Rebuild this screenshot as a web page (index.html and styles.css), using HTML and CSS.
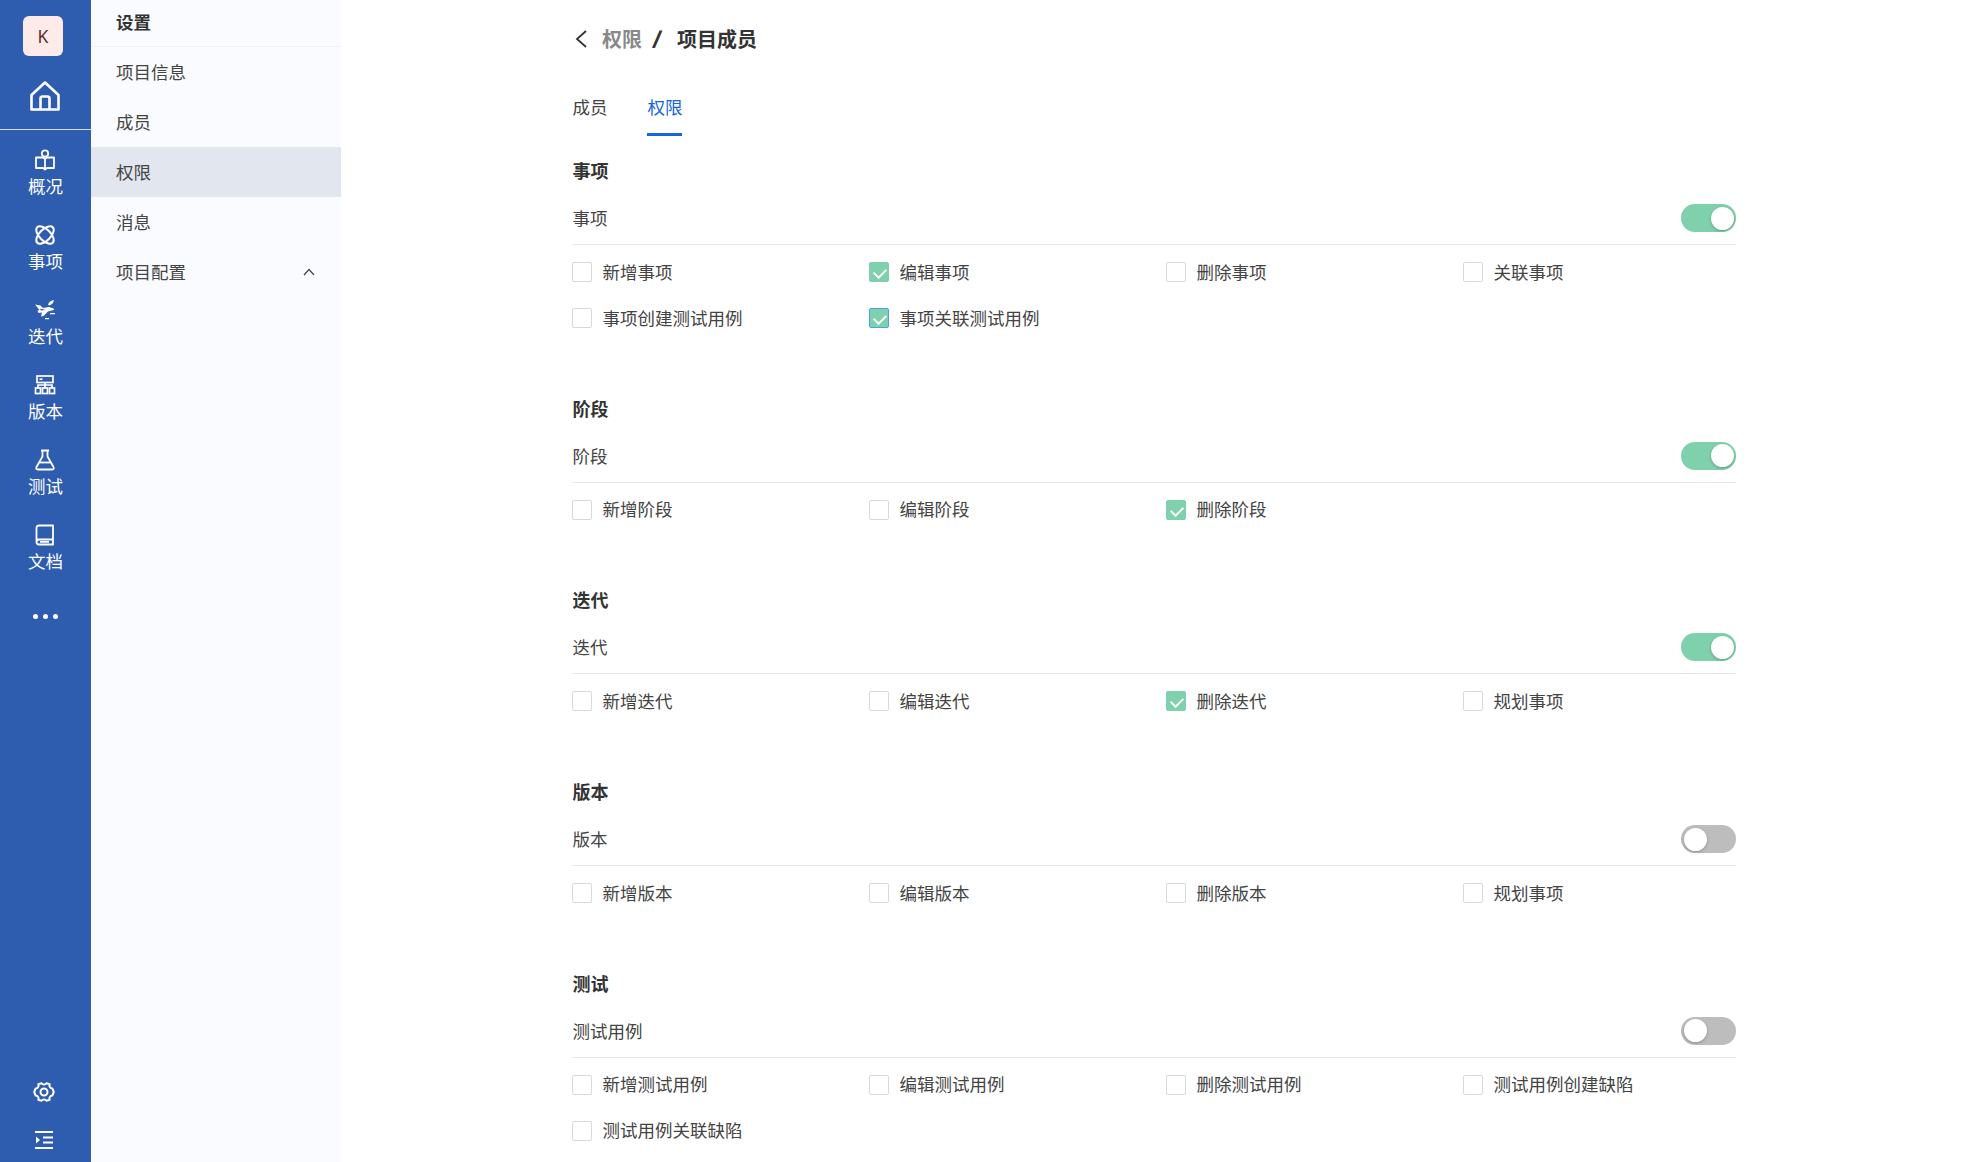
FILE: index.html
```html
<!DOCTYPE html>
<html lang="zh-CN">
<head>
<meta charset="utf-8">
<title>权限</title>
<link rel="stylesheet" href="styles.css">
</head>
<body>
<div class="app">
  <nav class="rail">
    <div class="avatar">K</div>
    <a class="home"><svg width="30" height="30" viewBox="0 0 30 30" fill="none" stroke="#fff" stroke-width="2.6" stroke-linejoin="round"><path d="M1.500 14 15 1.500 28.500 14v14.500h-27z"/><path d="M10.500 28.500V17.500q0-2 2-2h5q2 0 2 2v11"/></svg></a>
    <a class="rail-item"><svg width="22" height="22" viewBox="0 0 22 22" fill="none" stroke="#fff" stroke-width="1.800" stroke-linejoin="round"><path d="M2 8.500h7l2 1.500 2-1.500h7v10.500h-7l-2 1.500-2-1.500H2zM11 10v10.500"/><circle cx="11" cy="4.500" r="3.200"/></svg><span>概况</span></a>
    <a class="rail-item"><svg width="22" height="22" viewBox="0 0 22 22" fill="none" stroke="#fff" stroke-width="2"><ellipse cx="11" cy="11" rx="11" ry="5.600" transform="rotate(45 11 11)"/><ellipse cx="11" cy="11" rx="11" ry="5.600" transform="rotate(-45 11 11)"/></svg><span>事项</span></a>
    <a class="rail-item"><svg width="22" height="22" viewBox="0 0 22 22" fill="#fff"><path d="M1 5.500 6.500 6.500 9 9l6-1 4.500 1.500c1 .6.500 1.500-.5 1.800L14 12.500l-4.500 4.500-2.500.5 1-4-3.500.5-1-2.500 2-.5z"/><path d="M6.500 9.500l5 1.500-5 .5z" fill="#2e5cae"/><path d="M14 5.500c.5-2 2.500-4 6-4.500-.5 3-2.500 5-5 5.500z"/><path d="M16 14h5v1.300h-5zM11 19h4v1.300h-4z"/></svg><span>迭代</span></a>
    <a class="rail-item"><svg width="22" height="22" viewBox="0 0 22 22" fill="none" stroke="#fff" stroke-width="1.700"><rect x="3" y="2" width="16" height="6.500"/><path d="M5.500 5.200h3" /><rect x="1.500" y="14" width="5" height="5.500"/><rect x="8.500" y="14" width="5" height="5.500"/><rect x="15.500" y="14" width="5" height="5.500"/><path d="M4 14v-3h14v3M11 8.500V14"/></svg><span>版本</span></a>
    <a class="rail-item"><svg width="22" height="22" viewBox="0 0 22 22" fill="none" stroke="#fff" stroke-width="1.800" stroke-linejoin="round"><path d="M7 1.500h8M8.500 1.500v6L2.500 18q-1 2.500 1.500 2.500h14q2.500 0 1.500-2.500l-6-10.500v-6"/><path d="M5.500 13.500h11"/></svg><span>测试</span></a>
    <a class="rail-item"><svg width="22" height="22" viewBox="0 0 22 22" fill="none" stroke="#fff" stroke-width="1.800" stroke-linejoin="round"><path d="M19 1.500H5q-2.500 0-2.500 2.500v14q0 2.500 2.500 2.500h14zM2.500 18q0-2.500 2.500-2.500h14M6 17.800h9"/></svg><span>文档</span></a>
    <a class="more"><i></i><i></i><i></i></a>
    <a class="gear"><svg width="24" height="24" viewBox="0 0 24 24" fill="none" stroke="#fff" stroke-width="2" stroke-linejoin="round"><path d="M9.500 3.200a3 3 0 0 0 5 0l3.200.9a3 3 0 0 0 2.600 4.300l1.500 3.600-1.500 3.600a3 3 0 0 0-2.600 4.300l-3.200.9a3 3 0 0 0-5 0l-3.200-.9a3 3 0 0 0-2.600-4.300L2.200 12l1.500-3.600a3 3 0 0 0 2.600-4.300z"/><circle cx="12" cy="12" r="3.500"/></svg></a>
    <a class="fold"><svg width="18" height="18" viewBox="0 0 18 18" fill="#fff"><path d="M0 0h18v2H0zM0 16h18v2H0zM8 5.500h10v2H8zM8 10.500h10v2H8zM1 5.500 5 9 1 12.500z"/></svg></a>
  </nav>

  <aside class="sub">
    <div class="sub-title">设置</div>
    <a class="sub-item"><span>项目信息</span></a>
    <a class="sub-item"><span>成员</span></a>
    <a class="sub-item is-active"><span>权限</span></a>
    <a class="sub-item"><span>消息</span></a>
    <a class="sub-item"><span>项目配置</span><svg width="12" height="8" viewBox="0 0 12 8" fill="none" stroke="#444" stroke-width="1.200"><path d="M1 7l5-5.500L11 7"/></svg></a>
  </aside>

  <main class="main">
    <div class="crumbs">
      <svg class="back" width="12" height="18" viewBox="0 0 12 18" fill="none" stroke="#333" stroke-width="1.800"><path d="M11 1 2 9l9 8"/></svg>
      <span class="crumb-parent">权限</span>
      <span class="crumb-sep">/</span>
      <span class="crumb-current">项目成员</span>
    </div>
    <div class="tabs">
      <a class="tab">成员</a>
      <a class="tab is-active">权限</a>
    </div>

    <section class="group">
      <h3 class="group-title">事项</h3>
      <div class="group-head"><span class="group-name">事项</span><span class="switch is-on"><i></i></span></div>
      <div class="checks">
        <label class="check"><span class="box"></span><span class="text">新增事项</span></label>
        <label class="check"><span class="box is-checked"></span><span class="text">编辑事项</span></label>
        <label class="check"><span class="box"></span><span class="text">删除事项</span></label>
        <label class="check"><span class="box"></span><span class="text">关联事项</span></label>
        <label class="check"><span class="box"></span><span class="text">事项创建测试用例</span></label>
        <label class="check"><span class="box is-checked is-focus"></span><span class="text">事项关联测试用例</span></label>
      </div>
    </section>

    <section class="group">
      <h3 class="group-title">阶段</h3>
      <div class="group-head"><span class="group-name">阶段</span><span class="switch is-on"><i></i></span></div>
      <div class="checks">
        <label class="check"><span class="box"></span><span class="text">新增阶段</span></label>
        <label class="check"><span class="box"></span><span class="text">编辑阶段</span></label>
        <label class="check"><span class="box is-checked"></span><span class="text">删除阶段</span></label>
      </div>
    </section>

    <section class="group">
      <h3 class="group-title">迭代</h3>
      <div class="group-head"><span class="group-name">迭代</span><span class="switch is-on"><i></i></span></div>
      <div class="checks">
        <label class="check"><span class="box"></span><span class="text">新增迭代</span></label>
        <label class="check"><span class="box"></span><span class="text">编辑迭代</span></label>
        <label class="check"><span class="box is-checked"></span><span class="text">删除迭代</span></label>
        <label class="check"><span class="box"></span><span class="text">规划事项</span></label>
      </div>
    </section>

    <section class="group">
      <h3 class="group-title">版本</h3>
      <div class="group-head"><span class="group-name">版本</span><span class="switch"><i></i></span></div>
      <div class="checks">
        <label class="check"><span class="box"></span><span class="text">新增版本</span></label>
        <label class="check"><span class="box"></span><span class="text">编辑版本</span></label>
        <label class="check"><span class="box"></span><span class="text">删除版本</span></label>
        <label class="check"><span class="box"></span><span class="text">规划事项</span></label>
      </div>
    </section>

    <section class="group">
      <h3 class="group-title">测试</h3>
      <div class="group-head"><span class="group-name">测试用例</span><span class="switch"><i></i></span></div>
      <div class="checks">
        <label class="check"><span class="box"></span><span class="text">新增测试用例</span></label>
        <label class="check"><span class="box"></span><span class="text">编辑测试用例</span></label>
        <label class="check"><span class="box"></span><span class="text">删除测试用例</span></label>
        <label class="check"><span class="box"></span><span class="text">测试用例创建缺陷</span></label>
        <label class="check"><span class="box"></span><span class="text">测试用例关联缺陷</span></label>
      </div>
    </section>
  </main>
</div>
</body>
</html>
```

FILE: styles.css
```css
* { box-sizing: border-box; }
html, body { margin: 0; height: 100%; overflow: hidden; background: #fff; }
body { font-family: "Noto Sans CJK SC", "Noto Sans", sans-serif; font-size: 17.5px; color: #333; }
.app { display: flex; height: 100vh; }

.rail { width: 91px; flex: none; background: #2e5cae; color: #fff; display: flex; flex-direction: column; align-items: center; }
.avatar { width: 40px; height: 40px; margin: 16px 5px 0 0; border-radius: 6px; background: #ffeaea; color: #5a2a2a; display: flex; align-items: center; justify-content: center; font-family: "Noto Sans", sans-serif; font-size: 17.5px; }
.home { width: 100%; height: 74px; padding: 25px 1px 0 0; display: flex; justify-content: center; border-bottom: 1px solid #d6deee; align-items: flex-start; }
.rail-item { width: 75px; height: 75px; display: flex; flex-direction: column; align-items: center; padding-top: 19px; line-height: 22px; }
.rail-item svg { display: block; margin: 0 1px 4px 0; }
.more { display: flex; gap: 5px; margin-top: 34px; }
.more i { width: 5px; height: 5px; border-radius: 50%; background: #fff; }
.gear { margin-top: auto; display: block; height: 24px; margin-left: -3px; }
.gear svg, .fold svg { display: block; }
.fold { display: block; margin: 27px 0 13px -3px; }

.sub { width: 250px; flex: none; background: #fafbfe; }
.sub-title { height: 47px; padding-left: 25px; line-height: 44px; font-weight: 700; color: #333; border-bottom: 1px solid #f0f1f5; }
.sub-item { display: flex; align-items: center; justify-content: space-between; height: 50px; padding: 0 26px 0 25px; color: #444; }
.sub-item span { padding-bottom: 2px; }
.sub-item.is-active { background: #e2e6ef; }

.main { flex: 1; padding: 25px 0 0 231px; }
.main > * { width: 1164px; }
.crumbs { display: flex; align-items: center; height: 28px; font-size: 20px; font-weight: 700; line-height: 26px; }
.back { margin-left: 3px; }
.crumb-parent { margin-left: 15px; color: #888; }
.crumb-sep { margin-left: 11px; font-family: "Inter", sans-serif; font-weight: 800; font-style: italic; color: #333; }
.crumb-current { margin-left: 16px; color: #333; }

.tabs { display: flex; gap: 40px; margin-top: 42px; height: 41px; }
.tab { width: 35px; height: 41px; line-height: 24px; color: #444; padding-bottom: 14px; white-space: nowrap; text-indent: .5px; }
.tab.is-active { color: #1565e0; border-bottom: 3px solid #1565e0; }

.group { margin-top: 55.700px; }
.tabs + .group { margin-top: 23px; }
.group-title { margin: 0; height: 24px; padding-left: .5px; font-size: 18px; font-weight: 700; line-height: 22px; color: #333; }
.group-head { margin-top: 9px; height: 53px; display: flex; align-items: center; justify-content: space-between; border-bottom: 1px solid #e8e8e8; color: #444; }
.group-name { padding: 0 0 1px .5px; }
.checks { display: grid; grid-template-columns: repeat(4, 297px); padding-top: 4px; }
.check { display: flex; align-items: center; gap: 10px; height: 46px; color: #444; }
.text { padding: 0 0 2px .5px; }

.box { width: 20px; height: 20px; border: 1px solid #d9d9d9; border-radius: 2px; background: #fff; position: relative; }
.box.is-checked { background: #7fd0ac; border-color: #7fd0ac; }
.box.is-checked::after { content: ""; position: absolute; left: 6px; top: 3px; width: 6px; height: 10px; border: solid #fff; border-width: 0 2px 2px 0; transform: rotate(45deg); }
.box.is-focus { border-color: #4aa3e8; }

.switch { width: 55px; height: 28px; border-radius: 14px; background: #bdbdbd; position: relative; }
.switch i { position: absolute; top: 2.500px; left: 2.500px; width: 23px; height: 23px; border-radius: 50%; background: #fff; box-shadow: 0 1px 3px rgba(0,0,0,.25); }
.switch.is-on { background: #7fd0ac; }
.switch.is-on i { left: 29.500px; }
```
